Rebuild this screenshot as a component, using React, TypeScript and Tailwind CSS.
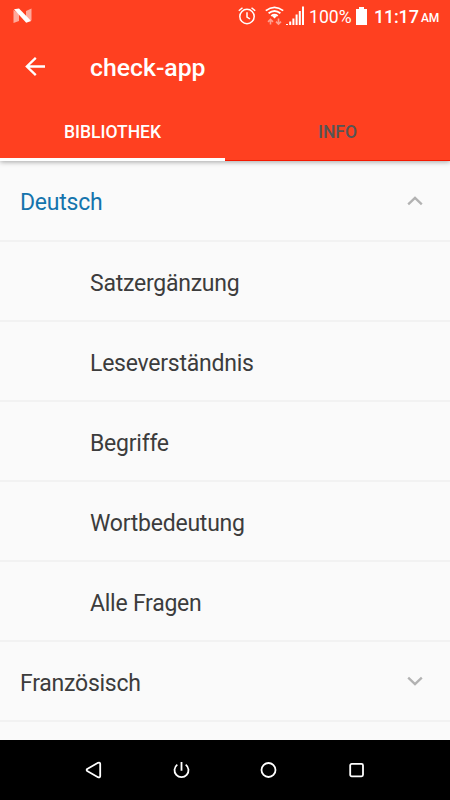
import { useState } from 'react';

const TOPICS = ['Satzergänzung', 'Leseverständnis', 'Begriffe', 'Wortbedeutung', 'Alle Fragen'];

function StatusBar() {
  return (
    <div className="flex h-8 items-center pl-[13px]">
      <svg width="19" height="16" viewBox="0 0 19 16">
        <path d="M0.5 2 L6 5.5 V13 L0.5 15Z M18.5 0.5 V12.5 L13 10.5 V3Z" fill="#fff" opacity="0.55" />
        <path d="M1 1.2L6 0.5L18.2 13L13.2 14.8Z" fill="#fff" />
      </svg>
      <svg className="ml-[206px]" width="18" height="20" viewBox="0 0 18 20" fill="none" stroke="#fff" strokeWidth="1.5">
        <circle cx="9" cy="10.5" r="7.2" />
        <path d="M9 6.2v4.8l3 2M0.8 4.8l3.7-3.1M17.2 4.8l-3.7-3.1" />
      </svg>
      <svg className="ml-[9px]" width="19" height="20" viewBox="0 0 19 20" fill="none" stroke="#fff">
        <path d="M0.8 4.6Q9.5 -2 18.2 4.6M3.6 7.3Q9.5 2.6 15.4 7.3M6.2 9.9Q9.5 7.4 12.8 9.9" strokeWidth="1.8" />
        <path d="M6.8 9.7L9.5 12.4L12.2 9.7Q9.5 8.2 6.8 9.7Z" fill="#fff" stroke="none" />
        <path d="M5.5 18.5v-5M3 15.8l2.5-2.4L8 15.8M13.5 12.5V18M11 15.7l2.5 2.4 2.5-2.4" strokeWidth="1.6" opacity="0.5" />
      </svg>
      <svg className="ml-[2px]" width="19" height="20" viewBox="0 0 19 20" fill="#fff">
        <path d="M0 18h2v1H0zM3.2 15.5h2V19h-2zM6.4 12.5h2V19h-2zM9.6 8.5h2V19h-2zM12.8 5h2v14h-2zM16 0.5h2V19h-2z" />
      </svg>
      <span className="ml-[4px] w-[43px] whitespace-nowrap pt-px text-[17.6px] leading-8">100%</span>
      <svg className="ml-[4px]" width="11" height="18" viewBox="0 0 11 18" fill="#fff">
        <path d="M3 0h5v2h3v16H0V2h3z" />
      </svg>
      <span className="ml-[7px] w-[44px] whitespace-nowrap pt-px text-[18px] font-medium leading-8 tracking-[-0.2px]">
        11:17
      </span>
      <span className="ml-[3px] pt-[4px] text-[12px] font-medium leading-8 tracking-[-0.3px]">AM</span>
    </div>
  );
}

function Chevron({ open }: { open: boolean }) {
  return (
    <svg width="16" height="10" viewBox="0 0 16 10" fill="none" stroke="#b2b2b2" strokeWidth="2.3">
      <path d={open ? 'M1.2 8.4L8 1.8L14.8 8.4' : 'M1.2 1.6L8 8.2L14.8 1.6'} />
    </svg>
  );
}

function NavigationBar() {
  return (
    <nav className="relative z-10 flex h-[60px] shrink-0 items-center gap-[70.5px] bg-black pl-[85px]">
      <svg width="17" height="18" viewBox="0 0 17 18" fill="none" stroke="#fff" strokeWidth="1.8" strokeLinejoin="round">
        <path d="M2.2 8Q1.2 9 2.2 10L13 16.2Q15.2 17 15.2 15V3Q15.2 1 13 1.8Z" />
      </svg>
      <svg width="17" height="18" viewBox="0 0 17 18" fill="none" stroke="#fff" strokeWidth="1.8">
        <path d="M4.3 3.6A7 7 0 1 0 12.7 3.6M8.5 1V9.8" />
      </svg>
      <svg width="17" height="18" viewBox="0 0 17 18" fill="none" stroke="#fff" strokeWidth="1.8">
        <circle cx="8.5" cy="9" r="7" />
      </svg>
      <svg width="17" height="18" viewBox="0 0 17 18" fill="none" stroke="#fff" strokeWidth="1.8">
        <rect x="2.2" y="2.9" width="12.8" height="12.4" rx="1.5" />
      </svg>
    </nav>
  );
}

export default function App() {
  const [open, setOpen] = useState(true);

  return (
    <div className="flex h-[800px] w-[450px] flex-col overflow-hidden bg-[#fafafa] font-['Roboto',sans-serif] text-[#3c3c3c]">
      <header className="relative z-10 h-[161px] shrink-0 bg-[#ff4020] text-white shadow-[0_1px_5px_rgba(0,0,0,0.35)]">
        <StatusBar />
        <div className="flex h-[70px] items-center pl-[25px]">
          <svg width="21" height="20" viewBox="0 0 21 20" fill="none" stroke="#fff" strokeWidth="2.3">
            <path d="M20 9.5H2M10.8 0.8L1.8 9.5L10.8 18.2" />
          </svg>
          <h1 className="ml-[44px] pt-[2px] text-[24.8px] font-medium leading-8">check-app</h1>
        </div>
        <div className="grid h-[59px] grid-cols-2 text-[17.5px] font-medium">
          <button className="border-b-[3px] border-white pt-[4px]">BIBLIOTHEK</button>
          <button className="border-b border-[#f51800] pt-[2px] text-[#555]">INFO</button>
        </div>
      </header>

      <main className="min-h-0 flex-1 overflow-hidden text-[23px] tracking-[-0.24px]">
        <button
          onClick={() => setOpen(!open)}
          className="flex h-[81px] w-full items-center justify-between border-b-2 border-[#f2f2f2] pl-5 pr-[27px] tracking-[-0.24px] text-[#1474ad]"
        >
          <span className="pt-[6px]">Deutsch</span>
          <Chevron open={open} />
        </button>
        {open &&
          TOPICS.map((topic) => (
            <div key={topic} className="flex h-20 items-center border-b-2 border-[#f2f2f2] pl-[90px] pt-[6px]">
              {topic}
            </div>
          ))}
        <button className="flex h-20 w-full items-center justify-between border-b-2 border-[#f2f2f2] pl-5 pr-[27px] tracking-[-0.24px]">
          <span className="pt-[6px]">Französisch</span>
          <Chevron open={false} />
        </button>
      </main>

      <NavigationBar />
    </div>
  );
}
